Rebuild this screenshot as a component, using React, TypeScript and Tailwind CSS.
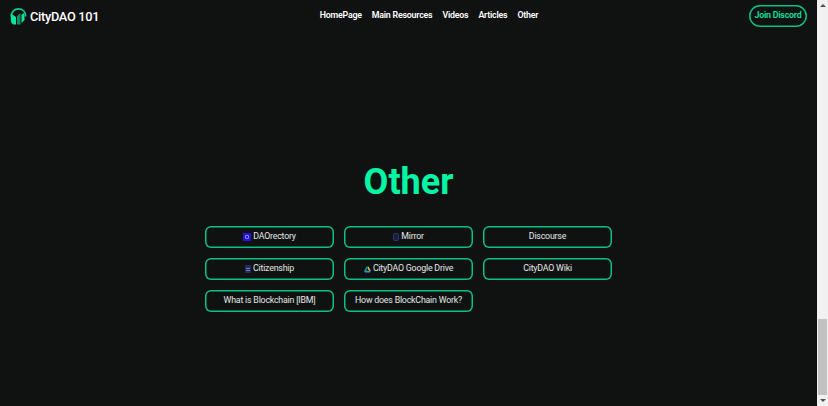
import type { ReactNode } from "react";

const navLinks = ["HomePage", "Main Resources", "Videos", "Articles", "Other"];

function Logo() {
  return (
    <svg width="17" height="17" viewBox="0 0 17 17" aria-hidden className="shrink-0">
      <path d="M1.300 8.500C1.300 3.500 4.500 .9 8.500 .9s7.200 2.600 7.200 7.600" fill="none" stroke="#0fc98b" strokeWidth="1.700" />
      <path d="M.8 5.500 6 9V16.500H4C1.800 16.500.8 14 .8 11Z" fill="#10e3a0" />
      <path d="M7 8 10.500 5V16.500H7Z" fill="#0a8f65" />
      <path d="M11.500 7 14.500 4.500V12L11.500 15Z" fill="#10e3a0" />
    </svg>
  );
}

function DaoIcon() {
  return (
    <span className="flex h-[8px] w-[8px] items-center justify-center bg-[#2a10e0]">
      <span className="h-[4px] w-[4px] rounded-[1px] border border-[#7f8cff]" />
    </span>
  );
}

function MirrorIcon() {
  return <span className="h-[8px] w-[6px] rounded-[2px] border border-[#2f3570] bg-[#1a1d40]" />;
}

function CitizenIcon() {
  return (
    <span className="flex h-[8px] w-[6px] flex-col justify-center gap-px bg-[#232a5c] px-px">
      <span className="h-px bg-[#6f7ac0]" />
      <span className="h-px bg-[#6f7ac0]" />
    </span>
  );
}

function DriveIcon() {
  return (
    <svg width="7" height="7" viewBox="0 0 8 8" aria-hidden>
      <path d="M5 .5 7.800 5.500H5.800L3.800 2Z" fill="#f4c430" />
      <path d="M.2 5.500 1.200 7.300H6.800L7.800 5.500Z" fill="#4285f4" />
      <path d="M3 .5H5L1.200 7.300 .2 5.500Z" fill="#0f9d58" />
    </svg>
  );
}

const links: { label: string; icon?: ReactNode }[] = [
  { label: "DAOrectory", icon: <DaoIcon /> },
  { label: "Mirror", icon: <MirrorIcon /> },
  { label: "Discourse" },
  { label: "Citizenship", icon: <CitizenIcon /> },
  { label: "CityDAO Google Drive", icon: <DriveIcon /> },
  { label: "CityDAO Wiki" },
  { label: "What is Blockchain [IBM]" },
  { label: "How does BlockChain Work?" },
];

function Scrollbar() {
  return (
    <div className="flex w-[11px] shrink-0 flex-col items-stretch bg-[#f1f1f1]">
      <div className="flex h-[11px] items-center justify-center">
        <span className="border-x-[3px] border-b-[3px] border-x-transparent border-b-[#505050]" />
      </div>
      <div className="flex-1" />
      <div className="mx-px h-[76px] bg-[#c1c1c1]" />
      <div className="flex h-[11px] items-center justify-center">
        <span className="border-x-[3px] border-t-[3px] border-x-transparent border-t-[#505050]" />
      </div>
    </div>
  );
}

export default function App() {
  return (
    <div className="flex h-screen overflow-hidden bg-[#101212] font-['Roboto','Noto_Sans',sans-serif] text-white">
      <main className="flex min-w-0 flex-1 flex-col">
        <header className="flex h-[32px] items-center justify-between px-[10px]">
          <a className="flex w-[99px] items-center gap-[3px]">
            <Logo />
            <span className="mt-[3px] text-[12.800px] leading-none font-medium tracking-[-0.3px] whitespace-nowrap">CityDAO 101</span>
          </a>
          <nav className="flex items-center gap-[10px] text-[8.800px] font-semibold tracking-[-0.2px]">
            {navLinks.map((l) => (
              <a key={l}>{l}</a>
            ))}
          </nav>
          <a className="flex h-[22px] w-[58px] items-center justify-center rounded-full text-[8.800px] font-semibold tracking-[-0.2px] whitespace-nowrap text-[#11e29d] shadow-[inset_0_0_0_1.5px_#0cc086]">
            Join Discord
          </a>
        </header>

        <section className="flex flex-col items-center pt-[128px]">
          <h1 className="text-[36px] leading-[44px] font-bold text-[#05f5a5]">Other</h1>
          <div className="mt-[22px] grid grid-cols-[repeat(3,129px)] gap-x-[10px] gap-y-[10px]">
            {links.map((link) => (
              <a
                key={link.label}
                className="flex h-[22px] items-center justify-center gap-[2px] rounded-[6px] text-[8.800px] tracking-[-0.2px] whitespace-nowrap text-[#e4e6e6] shadow-[inset_0_0_0_1.5px_#0cc086]"
              >
                {link.icon}
                {link.label}
              </a>
            ))}
          </div>
        </section>
      </main>
      <Scrollbar />
    </div>
  );
}
